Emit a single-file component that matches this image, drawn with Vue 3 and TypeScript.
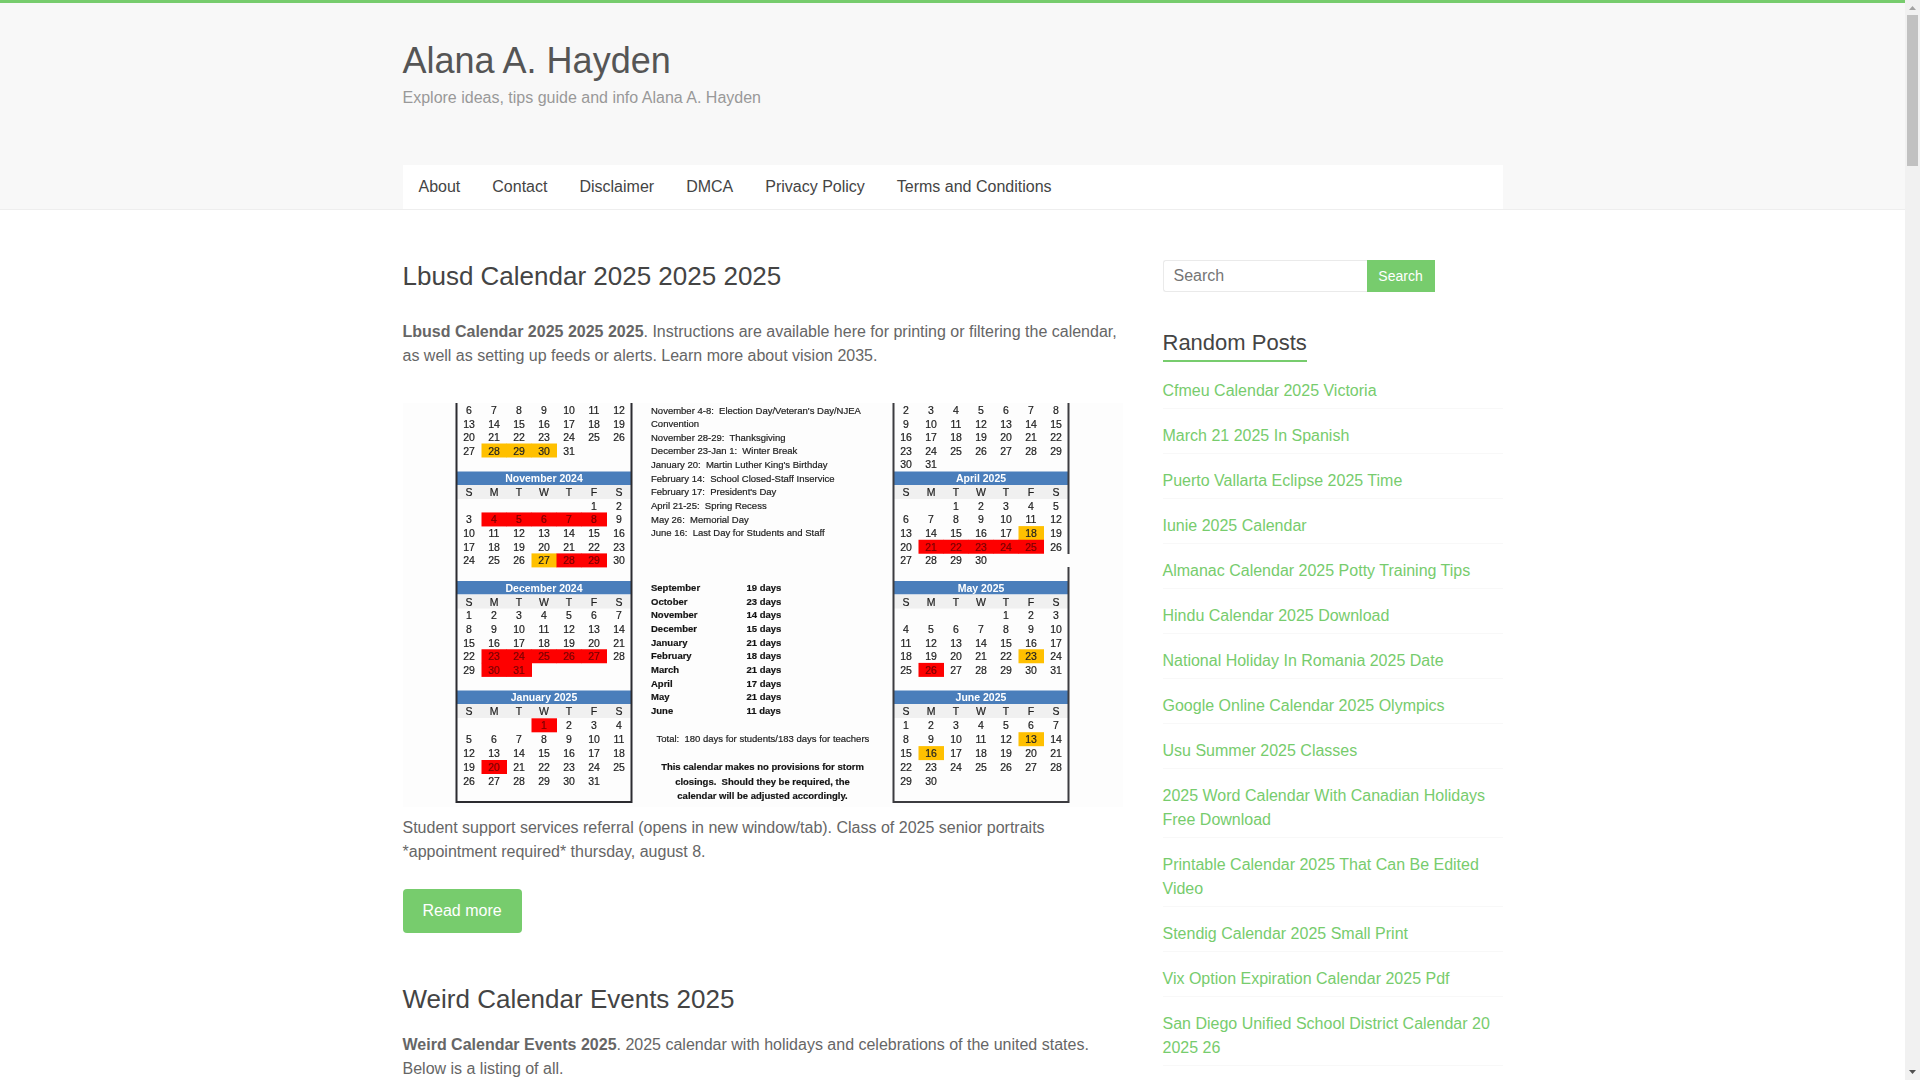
<script setup lang="ts">
interface Mark { cells: number[]; tone: 'amber' | 'red' }
interface Month {
  name: string
  x: number
  top: number
  pitch: number
  start: number
  from: number
  days: number
  marks: Mark[]
}

const menu: string[] = ['About', 'Contact', 'Disclaimer', 'DMCA', 'Privacy Policy', 'Terms and Conditions']

const randomPosts: string[] = [
  'Cfmeu Calendar 2025 Victoria',
  'March 21 2025 In Spanish',
  'Puerto Vallarta Eclipse 2025 Time',
  'Iunie 2025 Calendar',
  'Almanac Calendar 2025 Potty Training Tips',
  'Hindu Calendar 2025 Download',
  'National Holiday In Romania 2025 Date',
  'Google Online Calendar 2025 Olympics',
  'Usu Summer 2025 Classes',
  '2025 Word Calendar With Canadian Holidays Free Download',
  'Printable Calendar 2025 That Can Be Edited Video',
  'Stendig Calendar 2025 Small Print',
  'Vix Option Expiration Calendar 2025 Pdf',
  'San Diego Unified School District Calendar 20 2025 26',
]

// The drawing uses two units per pixel. "start" is the weekday of the first
// listed day, "from" is that day; months without a name are cut by the top edge.
const LEFT = 107
const RIGHT = 981
const months: Month[] = [
  { name: '', x: LEFT, top: -54, pitch: 27, start: 0, from: 6, days: 31, marks: [{ cells: [28, 29, 30], tone: 'amber' }] },
  { name: 'November 2024', x: LEFT, top: 137, pitch: 27.3, start: 5, from: 1, days: 30, marks: [{ cells: [4, 5, 6, 7, 8, 28, 29], tone: 'red' }, { cells: [27], tone: 'amber' }] },
  { name: 'December 2024', x: LEFT, top: 356, pitch: 27.3, start: 0, from: 1, days: 31, marks: [{ cells: [23, 24, 25, 26, 27, 30, 31], tone: 'red' }] },
  { name: 'January 2025', x: LEFT, top: 575, pitch: 27.8, start: 3, from: 1, days: 31, marks: [{ cells: [1, 20], tone: 'red' }] },
  { name: '', x: RIGHT, top: -54, pitch: 27, start: 0, from: 2, days: 31, marks: [] },
  { name: 'April 2025', x: RIGHT, top: 137, pitch: 27.3, start: 2, from: 1, days: 30, marks: [{ cells: [21, 22, 23, 24, 25], tone: 'red' }, { cells: [18], tone: 'amber' }] },
  { name: 'May 2025', x: RIGHT, top: 356, pitch: 27.3, start: 4, from: 1, days: 31, marks: [{ cells: [26], tone: 'red' }, { cells: [23], tone: 'amber' }] },
  { name: 'June 2025', x: RIGHT, top: 575, pitch: 27.8, start: 0, from: 1, days: 30, marks: [{ cells: [13, 16], tone: 'amber' }] },
]

const weekdays = ['S', 'M', 'T', 'W', 'T', 'F', 'S']

const drawn = months.map((m) => {
  const cells = Array.from({ length: m.days - m.from + 1 }, (_, i) => {
    const slot = m.start + i
    const day = m.from + i
    return {
      day,
      x: m.x + 25 + (slot % 7) * 50,
      y: m.top + 14 + (2 + Math.floor(slot / 7)) * m.pitch,
      tone: m.marks.find((k) => k.cells.includes(day))?.tone ?? '',
    }
  })
  return { ...m, cells, marked: cells.filter((c) => c.tone) }
})

const holidays: string[] = [
  "November 4-8:\u00a0 Election Day/Veteran's Day/NJEA",
  'Convention',
  'November 28-29:\u00a0 Thanksgiving',
  'December 23-Jan 1:\u00a0 Winter Break',
  "January 20:\u00a0 Martin Luther King's Birthday",
  'February 14:\u00a0 School Closed-Staff Inservice',
  "February 17:\u00a0 President's Day",
  'April 21-25:\u00a0 Spring Recess',
  'May 26:\u00a0 Memorial Day',
  'June 16:\u00a0 Last Day for Students and Staff',
]

const totals: [string, number][] = [
  ['September', 19], ['October', 23], ['November', 14], ['December', 15], ['January', 21],
  ['February', 18], ['March', 21], ['April', 17], ['May', 21], ['June', 11],
]

const notice: string[] = [
  'This calendar makes no provisions for storm',
  'closings.\u00a0 Should they be required, the',
  'calendar will be adjusted accordingly.',
]
</script>

<template>
  <div class="window">
    <div class="page">
      <header class="site-header">
        <div class="inner">
          <h1 class="site-title"><a href="#">Alana A. Hayden</a></h1>
          <p class="tagline">Explore ideas, tips guide and info Alana A. Hayden</p>
          <nav class="menu">
            <a v-for="item in menu" :key="item" href="#">{{ item }}</a>
          </nav>
        </div>
      </header>

      <div class="inner columns">
        <main>
          <article class="post featured">
            <h2><a href="#">Lbusd Calendar 2025 2025 2025</a></h2>
            <p><strong>Lbusd Calendar 2025 2025 2025</strong>. Instructions are available here for printing or filtering the calendar, as well as setting up feeds or alerts. Learn more about vision 2035.</p>
            <svg class="picture" viewBox="0 0 1440 810" role="img" aria-label="School calendar 2024 2025">
              <rect width="1440" height="808" fill="#fdfdfd" />
              <g class="soft">
                <g v-for="(m, mi) in drawn" :key="mi">
                  <template v-if="m.name">
                    <rect :x="m.x" :y="m.top" width="350" height="27" fill="#4a7ebb" />
                    <rect :x="m.x" :y="m.top + 27" width="350" height="28" fill="#f0f0f0" />
                    <text class="month" :x="m.x + 175" :y="m.top + 21">{{ m.name }}</text>
                    <text v-for="(d, i) in weekdays" :key="i" class="day" :x="m.x + 25 + i * 50" :y="m.top + 22 + m.pitch">{{ d }}</text>
                  </template>
                  <rect v-for="c in m.marked" :key="'r' + c.day" :class="c.tone" :x="c.x - 25" :y="c.y - 14" width="51" height="28" />
                  <text v-for="c in m.cells" :key="c.day" class="day" :class="{ dark: c.tone === 'red' }" :x="c.x" :y="c.y + 8">{{ c.day }}</text>
                </g>
                <path d="M107 0V798H457V0" fill="none" stroke="#2b2b30" stroke-width="4" />
                <path d="M981 0V798H1331V328M1331 302V0" fill="none" stroke="#3c3c40" stroke-width="4" />
                <text v-for="(h, i) in holidays" :key="h" class="note" x="496" :y="21 + i * 27.3">{{ h }}</text>
                <g v-for="([name, count], i) in totals" :key="name" class="bold">
                  <text x="496" :y="376 + i * 27.3">{{ name }}</text>
                  <text x="687" :y="376 + i * 27.3">{{ count }} days</text>
                </g>
                <text class="note" x="507" y="677">Total:&nbsp; 180 days for students/183 days for teachers</text>
                <text v-for="(n, i) in notice" :key="n" class="bold middle" x="719" :y="734 + i * 29">{{ n }}</text>
              </g>
            </svg>
            <p class="after">Student support services referral (opens in new window/tab). Class of 2025 senior portraits *appointment required* thursday, august 8.</p>
            <a class="more" href="#">Read more</a>
          </article>

          <article class="post">
            <h2><a href="#">Weird Calendar Events 2025</a></h2>
            <p><strong>Weird Calendar Events 2025</strong>. 2025 calendar with holidays and celebrations of the united states. Below is a listing of all.</p>
          </article>
        </main>

        <aside>
          <form class="search" @submit.prevent>
            <input type="text" placeholder="Search" aria-label="Search" />
            <button type="submit">Search</button>
          </form>
          <h3><span>Random Posts</span></h3>
          <ul>
            <li v-for="post in randomPosts" :key="post"><a href="#">{{ post }}</a></li>
          </ul>
        </aside>
      </div>
    </div>

    <div class="scrollbar" aria-hidden="true">
      <svg viewBox="0 0 15 15"><path d="M4 10h7L7.5 6z" fill="#a3a3a3" /></svg>
      <div class="track"><div class="thumb"></div></div>
      <svg viewBox="0 0 15 15"><path d="M4 5h7L7.5 9z" fill="#505050" /></svg>
    </div>
  </div>
</template>

<style>
body {
  margin: 0;
  background: #fff;
}
</style>

<style scoped>
.window {
  display: flex;
  height: 100vh;
  overflow: hidden;
  font: 16px/24px "Liberation Sans", Arial, sans-serif;
  color: #666;
}
.page {
  flex: 1;
  min-width: 0;
  overflow: hidden;
}
.inner {
  max-width: 1100px;
  margin: 0 auto;
}
a {
  color: inherit;
  text-decoration: none;
}
h1, h2, h3, p, ul {
  margin: 0;
  padding: 0;
  font-weight: 400;
}
.site-header {
  padding-top: 33px;
  border-top: 3px solid #77cc6d;
  border-bottom: 1px solid #eee;
  background: #f8f8f8;
}
.site-title {
  font-size: 36px;
  line-height: 50px;
  color: #555;
}
.tagline {
  color: #999;
}
.menu {
  display: flex;
  margin-top: 55px;
  background: #fff;
}
.menu a {
  padding: 10px 16px;
  color: #444;
}
.columns {
  display: grid;
  grid-template-columns: minmax(0, 1fr) 340px;
  gap: 40px;
  padding-top: 50px;
}
h2 {
  margin-bottom: 18px;
  font-size: 26px;
  line-height: 32px;
  color: #444;
}
.post {
  margin-bottom: 50px;
}
.featured h2 {
  margin-bottom: 28px;
}
.picture {
  display: block;
  width: 100%;
  margin-top: 35px;
}
.soft {
  filter: blur(1px);
}
.picture text {
  font-size: 19px;
  fill: #222;
  stroke: #222;
  stroke-width: 0.4;
}
.picture .month {
  font-size: 21px;
  font-weight: 700;
  text-anchor: middle;
  fill: #fff;
  stroke: none;
}
.picture .day {
  font-size: 21px;
  text-anchor: middle;
}
.picture .dark {
  fill: #700;
  stroke: #700;
}
.picture .bold text,
.picture .bold {
  font-weight: 700;
  fill: #111;
}
.picture .middle {
  text-anchor: middle;
}
.red {
  fill: #fe0000;
}
.amber {
  fill: #ffc000;
}
.after {
  margin-top: 8px;
}
.more {
  display: inline-block;
  margin-top: 25px;
  padding: 10px 20px;
  border-radius: 4px;
  background: #77cc6d;
  color: #fff;
}
.search {
  display: flex;
  margin-bottom: 34px;
}
.search input {
  box-sizing: border-box;
  width: 60%;
  height: 32px;
  padding: 0 10px;
  border: 1px solid #eaeaea;
  border-right: 0;
  border-radius: 3px 0 0 3px;
  font: inherit;
  color: #666;
  background: #fff;
}
.search input::placeholder {
  color: #757575;
}
.search button {
  width: 68px;
  padding: 0;
  border: 0;
  background: #77cc6d;
  color: #fff;
  font: 14px/24px "Liberation Sans", Arial, sans-serif;
}
h3 {
  display: flex;
  margin-bottom: 17px;
  font-size: 22px;
  line-height: 34px;
  color: #444;
}
h3 span {
  border-bottom: 2px solid #77cc6d;
}
ul {
  display: grid;
  gap: 15px;
  list-style: none;
}
li {
  padding-bottom: 5px;
  border-bottom: 1px solid #f8f8f8;
  color: #77cc6d;
}
.scrollbar {
  display: flex;
  flex-direction: column;
  width: 15px;
  background: #f1f1f1;
}
.scrollbar svg {
  display: block;
  width: 15px;
  height: 15px;
}
.track {
  flex: 1;
  padding: 0 2px;
}
.thumb {
  height: 151px;
  background: #c1c1c1;
}
</style>
